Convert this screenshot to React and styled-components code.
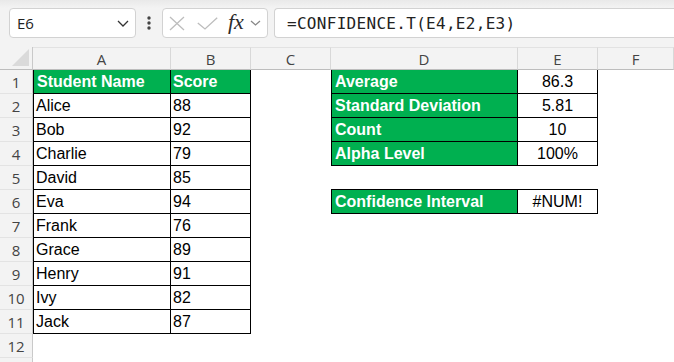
import React from 'react'
import styled, { createGlobalStyle } from 'styled-components'

const GlobalStyle = createGlobalStyle`
  html, body {
    margin: 0;
    padding: 0;
    background: #fff;
  }
  body {
    font-family: "Liberation Sans", Arial, sans-serif;
    overflow: hidden;
  }
`

const Page = styled.div`
  width: 674px;
  height: 362px;
  overflow: hidden;
  background: #fff;
`

const Toolbar = styled.div`
  display: flex;
  align-items: flex-start;
  height: 47px;
  box-sizing: border-box;
  padding: 8px 0 0 9px;
  background: linear-gradient(#e9e9e9, #f3f3f3 8px);
`

const Box = styled.div`
  display: flex;
  align-items: center;
  box-sizing: border-box;
  height: 30px;
  background: #fff;
  border: 1px solid #d2d2d2;
  border-radius: 4px;
`

const NameBox = styled(Box)`
  width: 127px;
  padding: 0 6px 0 7px;
  justify-content: space-between;
  font-family: "Open Sans", "Noto Sans", sans-serif;
  font-size: 15px;
  color: #222;
`

const Dots = styled.div`
  display: flex;
  justify-content: center;
  align-items: center;
  width: 26px;
  height: 30px;
`

const FormulaButtons = styled(Box)`
  width: 106px;
  padding-left: 6px;
`

const IconSlot = styled.div`
  display: flex;
  align-items: center;
  margin-left: ${p => p.$ml || 0}px;
`

const Fx = styled.span`
  font-family: "Liberation Serif", "DejaVu Serif", serif;
  font-style: italic;
  font-size: 22px;
  line-height: 1;
  color: #2b2b2b;
  margin-left: 10px;
  margin-top: -2px;
`

const FormulaBar = styled(Box)`
  flex: 1;
  margin-left: 6px;
  padding-left: 12px;
  border-right: none;
  border-radius: 4px 0 0 4px;
  font-family: "DejaVu Sans Mono", "Liberation Mono", monospace;
  font-size: 16px;
  letter-spacing: 0.3px;
  color: #222;
`

const Sheet = styled.div`
  display: grid;
  grid-template-columns: 33px 138px 80px 80px 187px 80px 1fr;
  grid-template-rows: 23px repeat(13, 24px);
`

const HeadBase = styled.div`
  display: flex;
  align-items: center;
  justify-content: center;
  box-sizing: border-box;
  background: #f3f3f3;
  font-family: "Open Sans", "Noto Sans", sans-serif;
  font-size: 15px;
  color: #444;
`

const Corner = styled(HeadBase)`
  border-right: 1px solid #c9c9c9;
  border-bottom: 1px solid #bdbdbd;
  align-items: flex-end;
  justify-content: flex-end;
  padding: 0 3px 3px 0;
`

const Triangle = styled.div`
  width: 17px;
  height: 17px;
  background: #dadada;
  clip-path: polygon(100% 0, 100% 100%, 0 100%);
`

const ColHead = styled(HeadBase)`
  border-top: 1px solid #e2e2e2;
  border-right: 1px solid #d8d8d8;
  border-bottom: 1px solid #bdbdbd;
`

const RowHead = styled(HeadBase)`
  padding-top: 1px;
  border-right: 1px solid #c9c9c9;
  border-bottom: 1px solid #e3e3e3;
`

const line = '1px solid #000'

const Cell = styled.div`
  display: flex;
  align-items: center;
  justify-content: ${p => (p.$center ? 'center' : 'flex-start')};
  box-sizing: border-box;
  padding: 1px 2px 0 ${p => (p.$fill && p.$bl ? 3 : 2)}px;
  font-size: 16px;
  white-space: nowrap;
  overflow: hidden;
  color: ${p => (p.$fill ? '#fff' : '#000')};
  font-weight: ${p => (p.$fill ? 700 : 400)};
  background: ${p => (p.$fill ? '#00b050' : '#fff')};
  border-left: ${p => (p.$bl ? line : 'none')};
  border-right: ${p => (p.$box ? line : 'none')};
  border-bottom: ${p => (p.$box ? line : 'none')};
  border-top: ${p => (p.$bt ? line : 'none')};
  margin-top: ${p => (p.$bt ? '-1px' : '0')};
`

const Chevron = ({ w = 12, h = 7, color = '#333' }) => (
  <svg width={w} height={h} viewBox={`0 0 ${w} ${h}`}>
    <path d={`M1 1 L${w / 2} ${h - 1} L${w - 1} 1`} fill="none" stroke={color} strokeWidth="1.3" />
  </svg>
)

const students = [
  ['Alice', 88], ['Bob', 92], ['Charlie', 79], ['David', 85], ['Eva', 94],
  ['Frank', 76], ['Grace', 89], ['Henry', 91], ['Ivy', 82], ['Jack', 87],
]

const stats = {
  1: ['Average', '86.3'],
  2: ['Standard Deviation', '5.81'],
  3: ['Count', '10'],
  4: ['Alpha Level', '100%'],
  6: ['Confidence Interval', '#NUM!'],
}

const columns = ['A', 'B', 'C', 'D', 'E', 'F']

const renderRow = r => {
  const student = r >= 2 && r <= 11 ? students[r - 2] : null
  const stat = stats[r]
  const first = r === 1
  return (
    <React.Fragment key={r}>
      {/* row 13 is only a sliver at the bottom edge, its number is hidden */}
      <RowHead>{r <= 12 ? r : ''}</RowHead>
      {first || student ? (
        <>
          <Cell $box $bl $fill={first}>{first ? 'Student Name' : student[0]}</Cell>
          <Cell $box $fill={first}>{first ? 'Score' : student[1]}</Cell>
        </>
      ) : (
        <>
          <Cell />
          <Cell />
        </>
      )}
      <Cell />
      {stat ? (
        <>
          <Cell $box $bl $fill $bt={r === 6}>{stat[0]}</Cell>
          <Cell $box $center $bt={r === 6}>{stat[1]}</Cell>
        </>
      ) : (
        <>
          <Cell />
          <Cell />
        </>
      )}
      <Cell />
    </React.Fragment>
  )
}

const App = () => (
  <Page>
    <GlobalStyle />
    <Toolbar>
      <NameBox>
        <span>E6</span>
        <Chevron />
      </NameBox>
      <Dots>
        <svg width="4" height="14" viewBox="0 0 4 14">
          <circle cx="2" cy="2" r="1.7" fill="#444" />
          <circle cx="2" cy="7" r="1.7" fill="#444" />
          <circle cx="2" cy="12" r="1.7" fill="#444" />
        </svg>
      </Dots>
      <FormulaButtons>
        <IconSlot>
          <svg width="16" height="15" viewBox="0 0 16 15">
            <path d="M1 1 L15 14 M15 1 L1 14" stroke="#bdbdbd" strokeWidth="1.3" fill="none" />
          </svg>
        </IconSlot>
        <IconSlot $ml={12}>
          <svg width="21" height="13" viewBox="0 0 21 13">
            <path d="M0.8 6 L8 12 L20.2 0.8" stroke="#bdbdbd" strokeWidth="1.3" fill="none" />
          </svg>
        </IconSlot>
        <Fx>fx</Fx>
        <IconSlot $ml={6}>
          <Chevron w={11} h={6} color="#888" />
        </IconSlot>
      </FormulaButtons>
      <FormulaBar>=CONFIDENCE.T(E4,E2,E3)</FormulaBar>
    </Toolbar>
    <Sheet>
      <Corner>
        <Triangle />
      </Corner>
      {columns.map(c => (
        <ColHead key={c}>{c}</ColHead>
      ))}
      {Array.from({ length: 13 }, (_, i) => renderRow(i + 1))}
    </Sheet>
  </Page>
)

export default App
